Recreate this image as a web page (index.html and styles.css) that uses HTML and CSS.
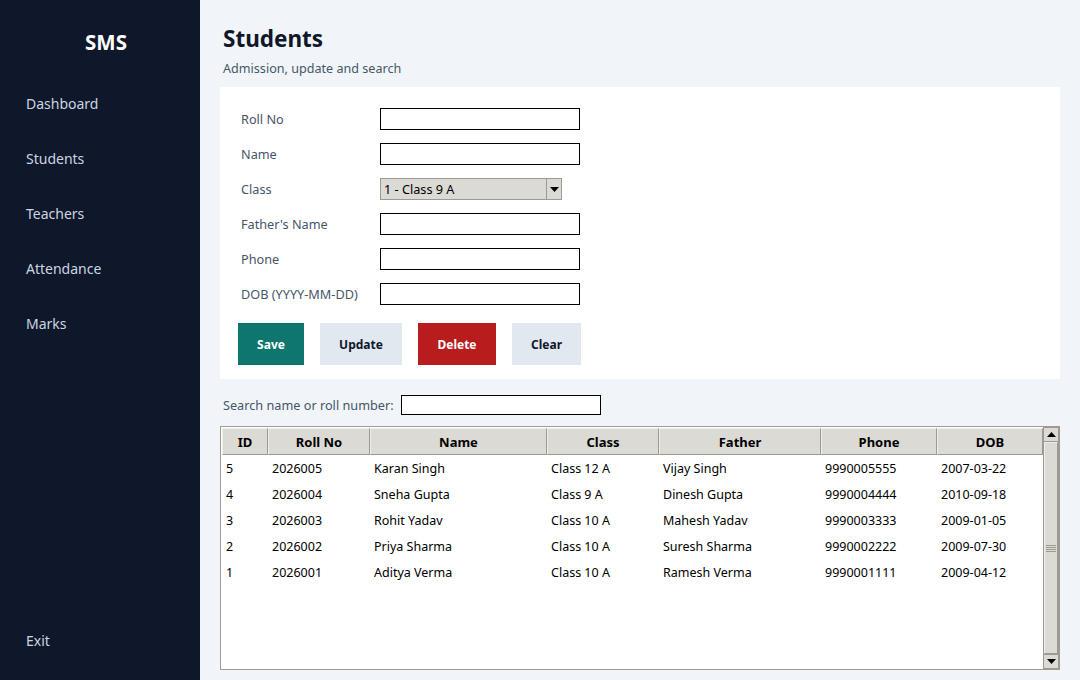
FILE: index.html
```html
<!DOCTYPE html>
<html>
<head>
<meta charset="utf-8">
<link rel="stylesheet" href="styles.css">
</head>
<body>
<div class="app">
  <aside class="sidebar">
    <div class="brand">SMS</div>
    <nav class="nav">
      <div class="nav-item">Dashboard</div>
      <div class="nav-item">Students</div>
      <div class="nav-item">Teachers</div>
      <div class="nav-item">Attendance</div>
      <div class="nav-item">Marks</div>
    </nav>
    <div class="nav-item exit">Exit</div>
  </aside>
  <main class="main">
    <h1 class="title">Students</h1>
    <div class="subtitle">Admission, update and search</div>
    <section class="card">
      <div class="form">
        <div class="row"><label class="lbl">Roll No</label><input class="inp" type="text"></div>
        <div class="row"><label class="lbl">Name</label><input class="inp" type="text"></div>
        <div class="row"><label class="lbl">Class</label>
          <div class="combo"><span class="combo-text">1 - Class 9 A</span><span class="combo-btn"><svg width="9" height="5" viewBox="0 0 9 5"><path d="M0 0h9L4.5 5z" fill="#000"/></svg></span></div>
        </div>
        <div class="row"><label class="lbl">Father's Name</label><input class="inp" type="text"></div>
        <div class="row"><label class="lbl">Phone</label><input class="inp" type="text"></div>
        <div class="row"><label class="lbl">DOB (YYYY-MM-DD)</label><input class="inp" type="text"></div>
      </div>
      <div class="buttons">
        <button class="btn btn-save">Save</button>
        <button class="btn btn-light btn-update">Update</button>
        <button class="btn btn-delete">Delete</button>
        <button class="btn btn-light btn-clear">Clear</button>
      </div>
    </section>
    <div class="search">
      <label class="search-lbl">Search name or roll number:</label>
      <input class="search-inp" type="text">
    </div>
    <div class="tree">
      <div class="tree-body">
        <div class="thead">
          <div class="th c-id">ID</div>
          <div class="th c-roll">Roll No</div>
          <div class="th c-name">Name</div>
          <div class="th c-class">Class</div>
          <div class="th c-father">Father</div>
          <div class="th c-phone">Phone</div>
          <div class="th c-dob">DOB</div>
        </div>
        <div class="tr"><div class="td c-id">5</div><div class="td c-roll">2026005</div><div class="td c-name">Karan Singh</div><div class="td c-class">Class 12 A</div><div class="td c-father">Vijay Singh</div><div class="td c-phone">9990005555</div><div class="td c-dob">2007-03-22</div></div>
        <div class="tr"><div class="td c-id">4</div><div class="td c-roll">2026004</div><div class="td c-name">Sneha Gupta</div><div class="td c-class">Class 9 A</div><div class="td c-father">Dinesh Gupta</div><div class="td c-phone">9990004444</div><div class="td c-dob">2010-09-18</div></div>
        <div class="tr"><div class="td c-id">3</div><div class="td c-roll">2026003</div><div class="td c-name">Rohit Yadav</div><div class="td c-class">Class 10 A</div><div class="td c-father">Mahesh Yadav</div><div class="td c-phone">9990003333</div><div class="td c-dob">2009-01-05</div></div>
        <div class="tr"><div class="td c-id">2</div><div class="td c-roll">2026002</div><div class="td c-name">Priya Sharma</div><div class="td c-class">Class 10 A</div><div class="td c-father">Suresh Sharma</div><div class="td c-phone">9990002222</div><div class="td c-dob">2009-07-30</div></div>
        <div class="tr"><div class="td c-id">1</div><div class="td c-roll">2026001</div><div class="td c-name">Aditya Verma</div><div class="td c-class">Class 10 A</div><div class="td c-father">Ramesh Verma</div><div class="td c-phone">9990001111</div><div class="td c-dob">2009-04-12</div></div>
      </div>
      <div class="scrollbar">
        <div class="sb-btn"><svg width="9" height="5" viewBox="0 0 9 5"><path d="M0 5h9L4.5 0z" fill="#000"/></svg></div>
        <div class="sb-thumb"><div class="grip"></div></div>
        <div class="sb-btn"><svg width="9" height="5" viewBox="0 0 9 5"><path d="M0 0h9L4.5 5z" fill="#000"/></svg></div>
      </div>
    </div>
  </main>
</div>
</body>
</html>
```
FILE: styles.css
```css
* { box-sizing: border-box; }
html, body { margin: 0; padding: 0; }
body {
  width: 1080px;
  height: 680px;
  overflow: hidden;
  font-family: "Noto Sans", "Open Sans", sans-serif;
  background: #f1f5f9;
}
.app { display: flex; height: 680px; }

.sidebar {
  width: 200px;
  flex: none;
  background: #0f172a;
  display: flex;
  flex-direction: column;
  padding: 27px 0 26px 0;
}
.brand {
  text-align: center;
  color: #ffffff;
  font-weight: 700;
  font-size: 20.5px;
  line-height: 30px;
  padding-left: 12px;
  margin-bottom: 37px;
}
.nav { display: flex; flex-direction: column; gap: 35px; flex: 1; }
.nav-item {
  color: #cbd5e1;
  font-size: 14px;
  line-height: 20px;
  padding-left: 26px;
}
.exit { margin-bottom: 3px; }

.main {
  flex: 1;
  padding: 23px 20px 0 20px;
  display: flex;
  flex-direction: column;
}
.title {
  margin: 0 0 0 3px;
  font-size: 22.5px;
  font-weight: 700;
  color: #0f172a;
  line-height: 32px;
}
.subtitle {
  margin: 5px 0 0 3px;
  font-size: 12.6px;
  line-height: 18px;
  color: #475569;
}
.card {
  background: #ffffff;
  margin-top: 9px;
  padding: 21px 18px 14px 18px;
  height: 292px;
}
.form { display: flex; flex-direction: column; gap: 13px; }
.row { display: flex; align-items: center; height: 22px; }
.lbl {
  width: 142px;
  padding-left: 3px;
  font-size: 12.7px;
  color: #475569;
}
.inp {
  width: 200px;
  height: 22px;
  border: 1px solid #000;
  background: #fff;
  margin: 0;
  padding: 0 3px;
  outline: none;
}
.combo {
  width: 182px;
  height: 22px;
  background: #dcdad5;
  border: 1px solid #9e9a91;
  display: flex;
  align-items: center;
}
.combo-text {
  flex: 1;
  font-size: 12.7px;
  color: #000;
  padding-left: 3px;
}
.combo-btn {
  width: 15px;
  height: 20px;
  border-left: 1px solid #9e9a91;
  display: flex;
  align-items: center;
  justify-content: center;
}
.buttons { display: flex; gap: 16px; margin-top: 18px; }
.btn {
  height: 42px;
  border: none;
  font-family: "Noto Sans", "Open Sans", sans-serif;
  font-weight: 700;
  font-size: 12px;
  padding: 0;
}
.btn-save { width: 66px; background: #0f766e; color: #fff; }
.btn-update { width: 82px; }
.btn-delete { width: 78px; background: #b91c1c; color: #fff; }
.btn-clear { width: 69px; }
.btn-light { background: #e2e8f0; color: #0f172a; }

.search {
  display: flex;
  align-items: center;
  margin-top: 16px;
  height: 20px;
  padding-left: 3px;
}
.search-lbl { font-size: 12.7px; color: #475569; width: 178px; }
.search-inp {
  width: 200px;
  height: 20px;
  border: 1px solid #000;
  background: #fff;
  margin: 0;
  outline: none;
}
.tree {
  margin-top: 11px;
  width: 840px;
  height: 244px;
  border: 1px solid #9e9a91;
  background: #fff;
  display: flex;
  padding: 1px;
}
.tree-body { flex: 1; }
.thead { display: flex; height: 27px; }
.th {
  background: #dcdad5;
  border: 1px solid #9e9a91;
  border-top-color: #eeede9;
  border-left-color: #eeede9;
  font-size: 13px;
  font-weight: 700;
  color: #000;
  text-align: center;
  line-height: 26px;
}
.tr { display: flex; height: 26px; align-items: center; }
.td { font-size: 12.5px; color: #000; padding-left: 4px; white-space: nowrap; }
.c-id { width: 46px; }
.c-roll { width: 102px; }
.c-name { width: 177px; }
.c-class { width: 112px; }
.c-father { width: 162px; }
.c-phone { width: 116px; }
.c-dob { width: 106px; }

.scrollbar {
  width: 16px;
  display: flex;
  flex-direction: column;
  background: #dcdad5;
  border: 1px solid #9e9a91;
  margin: -1px -1px -1px 0;
}
.sb-btn {
  height: 14px;
  display: flex;
  align-items: center;
  justify-content: center;
  border-bottom: 1px solid #9e9a91;
}
.sb-btn:last-child { border-bottom: none; border-top: 1px solid #9e9a91; }
.sb-thumb {
  flex: 1;
  border: 1px solid #eeede9;
  border-right-color: #9e9a91;
  border-bottom-color: #9e9a91;
  display: flex;
  align-items: center;
  justify-content: center;
}
.grip {
  width: 10px;
  height: 7px;
  background: repeating-linear-gradient(#9e9a91 0 1px, transparent 1px 2px);
}
```
